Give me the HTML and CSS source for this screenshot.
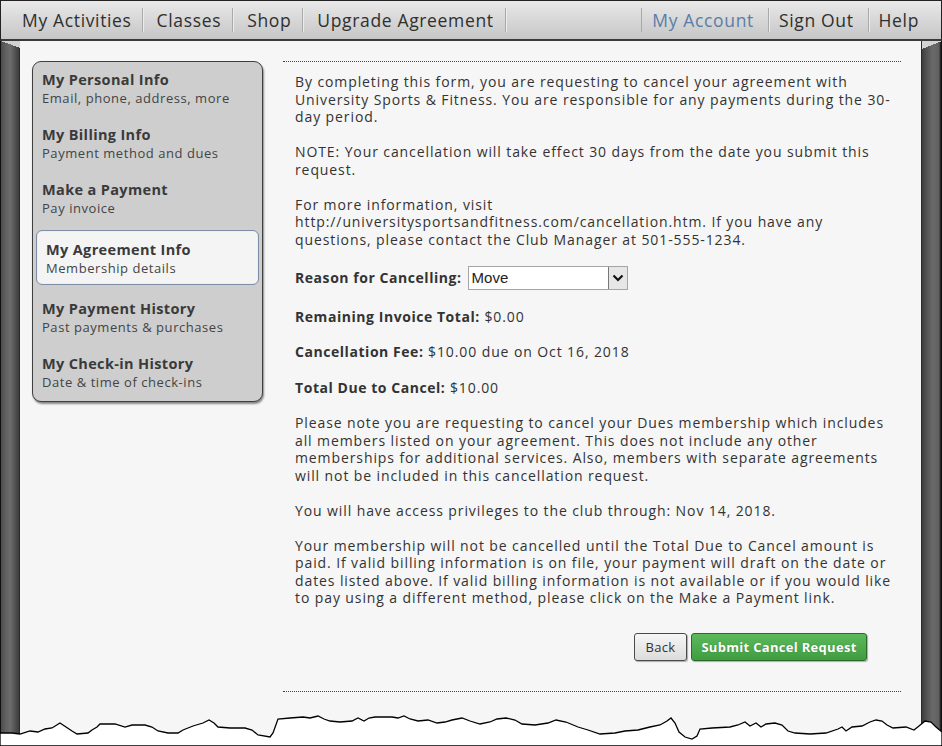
FILE: index.html
```html
<!DOCTYPE html>
<html>
<head>
<meta charset="utf-8">
<link rel="stylesheet" href="styles.css">
</head>
<body>
<div class="page">
  <nav class="topnav">
    <ul class="nav-group nav-left">
      <li class="nav-item">My Activities</li>
      <li class="nav-item">Classes</li>
      <li class="nav-item">Shop</li>
      <li class="nav-item">Upgrade Agreement</li>
    </ul>
    <ul class="nav-group nav-right">
      <li class="nav-item current">My Account</li>
      <li class="nav-item">Sign Out</li>
      <li class="nav-item last">Help</li>
    </ul>
  </nav>
  <div class="frame">
    <div class="stripe stripe-left"></div>
    <div class="content">
      <aside class="sidebar">
        <div class="side-item"><div class="side-title">My Personal Info</div><div class="side-sub">Email, phone, address, more</div></div>
        <div class="side-item"><div class="side-title">My Billing Info</div><div class="side-sub">Payment method and dues</div></div>
        <div class="side-item"><div class="side-title">Make a Payment</div><div class="side-sub">Pay invoice</div></div>
        <div class="side-item active"><div class="side-title">My Agreement Info</div><div class="side-sub">Membership details</div></div>
        <div class="side-item"><div class="side-title">My Payment History</div><div class="side-sub">Past payments &amp; purchases</div></div>
        <div class="side-item"><div class="side-title">My Check-in History</div><div class="side-sub">Date &amp; time of check-ins</div></div>
      </aside>
      <main class="main">
        <div class="main-body">
          <p>By completing this form, you are requesting to cancel your agreement with University Sports &amp; Fitness. You are responsible for any payments during the 30-day period.</p>
          <p>NOTE: Your cancellation will take effect 30 days from the date you submit this request.</p>
          <p>For more information, visit http://universitysportsandfitness.com/cancellation.htm. If you have any questions, please contact the Club Manager at 501-555-1234.</p>
          <div class="reason-row">
            <span class="label">Reason for Cancelling:</span>
            <div class="select">
              <span class="select-value">Move</span>
              <span class="select-arrow"><svg width="12" height="8" viewBox="0 0 12 8"><path d="M1.5 1.5 L6 6 L10.5 1.5" fill="none" stroke="#111" stroke-width="2.2"/></svg></span>
            </div>
          </div>
          <p class="field"><span class="label">Remaining Invoice Total:</span> $0.00</p>
          <p class="field"><span class="label">Cancellation Fee:</span> $10.00 due on Oct 16, 2018</p>
          <p class="field"><span class="label">Total Due to Cancel:</span> $10.00</p>
          <p>Please note you are requesting to cancel your Dues membership which includes all members listed on your agreement. This does not include any other memberships for additional services. Also, members with separate agreements will not be included in this cancellation request.</p>
          <p>You will have access privileges to the club through: Nov 14, 2018.</p>
          <p>Your membership will not be cancelled until the Total Due to Cancel amount is paid. If valid billing information is on file, your payment will draft on the date or dates listed above. If valid billing information is not available or if you would like to pay using a different method, please click on the Make a Payment link.</p>
          <div class="actions">
            <button class="btn btn-back">Back</button>
            <button class="btn btn-submit">Submit Cancel Request</button>
          </div>
        </div>
      </main>
    </div>
    <div class="stripe stripe-right"></div>
  </div>
  <svg class="torn" width="942" height="40" viewBox="0 706 942 40" preserveAspectRatio="none">
    <path d="M0 733 L12 733 L20 734 L30 731 L38 732 L45 729 L52 728 L60 723 L66 727 L72 731 L77 734 L88 733 L92 730 L97 727 L100 724 L115 724 L125 727 L132 725 L145 725 L152 727 L158 731 L168 733 L178 733 L183 730 L188 728 L193 726 L203 723 L209 720 L214 723 L218 727 L230 728 L245 728 L252 730 L258 735 L270 737 L273 733 L278 719 L290 718 L303 717 L310 718 L318 716 L324 719 L330 721 L340 722 L352 721 L358 718 L364 721 L369 718 L375 717 L392 717 L398 718 L404 716 L410 719 L418 721 L428 720 L437 723 L445 722 L452 720 L462 718 L470 721 L480 724 L490 722 L497 719 L506 718 L515 720 L522 724 L535 725 L548 723 L556 720 L566 722 L578 727 L588 730 L600 734 L615 733 L625 731 L638 730 L650 727 L660 725 L667 721 L671 718 L675 723 L679 732 L685 737 L692 739 L697 736 L700 729 L712 728 L730 727 L738 725 L745 722 L750 726 L756 723 L761 727 L766 724 L775 723 L782 725 L788 731 L795 733 L810 734 L826 733 L838 729 L842 727 L846 731 L852 727 L862 726 L870 722 L876 720 L882 721 L887 725 L893 728 L906 727 L914 730 L919 726 L925 721 L931 722 L936 727 L942 732 L942 746 L0 746 Z" fill="#fff" stroke="#000" stroke-width="1.3" stroke-linejoin="miter"/>
  </svg>
</div>
</body>
</html>
```
FILE: styles.css
```css
* { box-sizing: border-box; }
html, body {
  margin: 0;
  padding: 0;
  background: #fff;
}
body {
  font-family: "Open Sans", "DejaVu Sans", sans-serif;
  color: #333;
  width: 942px;
  height: 746px;
  overflow: hidden;
}
.page {
  position: relative;
  width: 942px;
  height: 746px;
  display: flex;
  flex-direction: column;
}
.topnav {
  height: 41px;
  flex: none;
  display: flex;
  justify-content: space-between;
  align-items: center;
  background: linear-gradient(#e9e9e9, #d7d7d7 50%, #c6c6c6);
  border: 1px solid #222;
  border-bottom: 2px solid #3a3a3a;
  padding: 0 0 0 7px;
}
.nav-group {
  list-style: none;
  margin: 0;
  padding: 0;
  display: flex;
  align-items: center;
  height: 100%;
}
.nav-item {
  font-size: 17.5px;
  line-height: 24px;
  color: #2f2f2f;
  border-right: 1px solid #a9a9a9;
  box-shadow: 1px 0 0 #ececec;
  letter-spacing: 0.65px;
}
.nav-left .nav-item { padding: 0 11px 0 14px; }
.nav-left .nav-item:first-child { padding-right: 10px; }
.nav-right .nav-item { padding: 0 14px 0 10px; }
.nav-right .nav-item:first-child {
  border-left: 1px solid #a9a9a9;
}
.nav-item.current { color: #5a7ea6; }
.nav-right .nav-item.last { border-right: none; box-shadow: none; padding-right: 22px; }

.frame {
  flex: 1;
  display: flex;
  min-height: 0;
}
.stripe {
  width: 20px;
  flex: none;
  position: relative;
}
.stripe-left {
  background: linear-gradient(to right, #111 0, #111 1px, #4c4c4c 1px, #616161 30%, #6c6c6c 55%, #535353 78%, #3d3d3d 100%);
  border-right: 1px solid #2a2a2a;
}
.stripe-left::before {
  content: "";
  position: absolute;
  left: 1px;
  top: 0;
  width: 19px;
  height: 7px;
  background: linear-gradient(to top right, transparent 50%, #d2d2d2 50%);
}
.stripe-right {
  width: 21px;
  background: linear-gradient(to right, #3e3e3e 0, #555 25%, #6a6a6a 55%, #5f5f5f 85%, #111 95%, #111 100%);
  border-left: 1px solid #2a2a2a;
}
.stripe-right::before {
  content: "";
  position: absolute;
  left: 0;
  top: 0;
  width: 20px;
  height: 8px;
  background: linear-gradient(to top left, transparent 50%, #d2d2d2 50%);
}
.content {
  flex: 1;
  background: #f6f6f6;
  display: flex;
  align-items: flex-start;
  padding: 20px 20px 0 12px;
  gap: 20px;
}
.sidebar {
  width: 231px;
  flex: none;
  background: #cecece;
  border: 1px solid #3f3f3f;
  border-radius: 9px;
  box-shadow: 1px 2px 2px rgba(0,0,0,0.45);
  padding: 0;
}
.side-item {
  padding: 9px 9px 10px;
}
.side-title {
  font-size: 14.5px;
  font-weight: 700;
  line-height: 18px;
  color: #3a3a3a;
  letter-spacing: 0.35px;
}
.side-sub {
  font-size: 13px;
  line-height: 18px;
  color: #444;
  letter-spacing: 0.55px;
}
.side-item.active {
  margin: 3px 3px 6px;
  background: #f4f4f4;
  border: 1px solid #7d8ea5;
  border-radius: 6px;
  padding: 10px 9px 7px;
  box-shadow: inset 0 0 1px rgba(0,0,0,0.2);
}
.main {
  flex: 1;
  border-top: 1px dotted #444;
}
.main-body {
  padding: 11px 8px 30px 12px;
  border-bottom: 1px dotted #444;
  font-size: 14px;
  line-height: 17.5px;
  letter-spacing: 0.9px;
}
.main-body p {
  margin: 0 0 17.5px;
}
.label { font-weight: 700; letter-spacing: 0.55px; }
.reason-row {
  display: flex;
  align-items: center;
  gap: 6px;
  margin: 0 0 18px;
}
.select {
  width: 160px;
  height: 24px;
  background: #fff;
  border: 1px solid #a5a5a5;
  display: flex;
  align-items: center;
  justify-content: space-between;
  padding-left: 3px;
}
.select-value {
  font-family: "Liberation Sans", Arial, sans-serif;
  font-size: 15px;
  color: #222;
  letter-spacing: 0;
}
.select-arrow {
  width: 19px;
  height: 22px;
  background: #e6e6e6;
  border-left: 1px solid #777;
  display: flex;
  align-items: center;
  justify-content: center;
}
.main-body p.field { margin-bottom: 18px; }
.actions {
  display: flex;
  justify-content: flex-end;
  gap: 4px;
  padding-right: 26px;
  padding-top: 9px;
}
.btn {
  font-family: "Open Sans", "DejaVu Sans", sans-serif;
  font-size: 13px;
  height: 28px;
  border-radius: 3px;
  padding: 0 6px;
  cursor: pointer;
  box-shadow: 1px 1px 1px rgba(0,0,0,0.3);
  letter-spacing: 0.3px;
}
.btn-back {
  width: 53px;
  color: #333;
  background: linear-gradient(#f6f6f6, #dcdcdc);
  border: 1px solid #4a4a4a;
}
.btn-submit {
  width: 176px;
  color: #fff;
  font-weight: 700;
  background: linear-gradient(#5cba5c, #3f9c40);
  border: 1px solid #2c6a2c;
  text-shadow: 0 0 1px rgba(0,0,0,0.3);
}
.torn {
  position: absolute;
  left: 0;
  bottom: 0;
  display: block;
}
```
